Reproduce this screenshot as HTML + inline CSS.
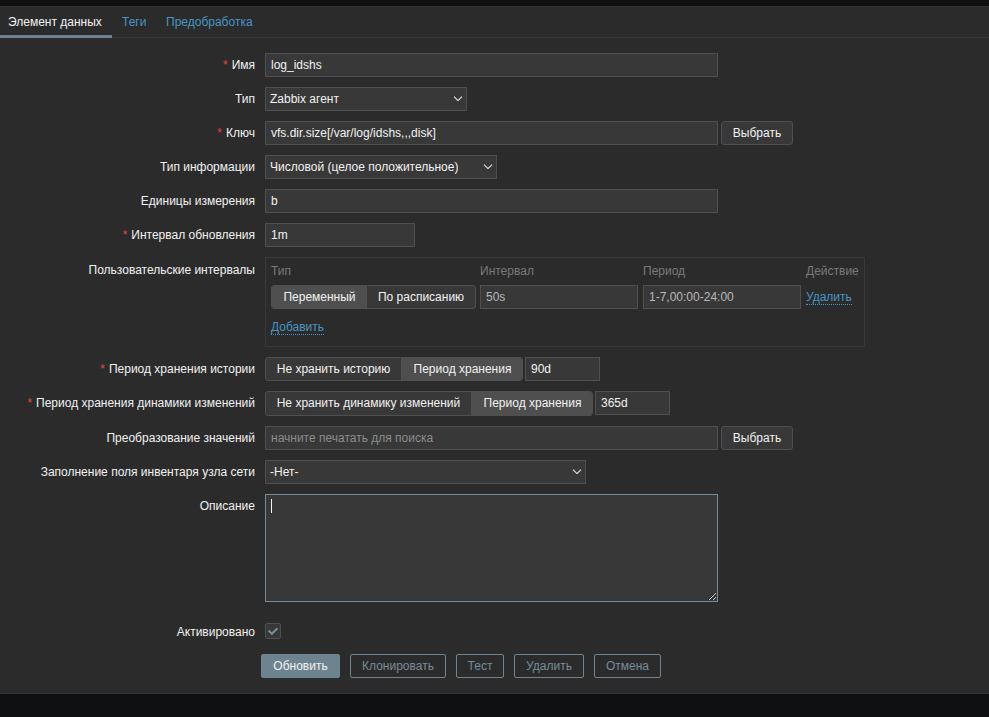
<!DOCTYPE html>
<html><head><meta charset="utf-8">
<style>
*{box-sizing:border-box;margin:0;padding:0}
html,body{width:989px;height:717px;overflow:hidden;background:#2b2b2b;font-family:"Liberation Sans",sans-serif;font-size:12px;color:#f2f2f2}
.a{position:absolute;white-space:nowrap}
.topband{left:0;top:0;width:989px;height:6px;background:#0f1012}
.topline{left:0;top:6px;width:989px;height:1px;background:#333}
.botband{left:0;top:694px;width:989px;height:23px;background:#0f1012}
.tabline{left:0;top:37px;width:989px;height:1px;background:#383838}
.tab{top:15px;line-height:14px;color:#4796c4}
.tabact{left:0;top:35px;width:112px;height:3px;background:#6b828e}
.lbl{right:734px;line-height:14px;text-align:right}
.req::before{content:"*";color:#e2473f;margin-right:4px}
.inp{left:265px;height:24px;border:1px solid #4f4f4f;background:#383838;padding:0 5px;line-height:22px;color:#f2f2f2;overflow:hidden}
.sel{padding-left:4px}
.sel svg{position:absolute;right:3px;top:7px}
.btng{height:24px;border:1px solid #4f4f4f;background:#383838;border-radius:3px;line-height:22px;text-align:center;color:#f2f2f2}
.th{top:264px;line-height:14px;color:#7a7a7a}
.rad{left:265px;height:24px;border:1px solid #4f4f4f;background:#383838;border-radius:3px;overflow:hidden}
.rad span{position:absolute;top:0;bottom:0;line-height:22px;text-align:center;color:#f2f2f2}
.rad .on{background:#4f4f4f}
.rad .on2{padding-left:2px}
.lnk{line-height:14px;color:#4796c4;border-bottom:1px dotted #4796c4}
.btn{top:654px;height:24px;border:1px solid #6e8591;border-radius:2px;line-height:22px;text-align:center;color:#768d99;background:transparent}
</style></head><body>
<div class="a topband"></div>
<div class="a topline"></div>
<div class="a tabline"></div>
<div class="a tabact"></div>
<div class="a tab" style="left:8px;color:#f2f2f2">Элемент данных</div>
<div class="a tab" style="left:122px">Теги</div>
<div class="a tab" style="left:166px">Предобработка</div>

<div class="a lbl req" style="top:58px">Имя</div>
<div class="a inp" style="top:53px;width:453px">log_idshs</div>

<div class="a lbl" style="top:92px">Тип</div>
<div class="a inp sel" style="top:87px;width:202px">Zabbix агент<svg width="10" height="6" viewBox="0 0 10 6"><path d="M1 1.6 L5 5.6 L9 1.6" fill="none" stroke="#e0e0e0" stroke-width="1.15"/></svg></div>

<div class="a lbl req" style="top:126px">Ключ</div>
<div class="a inp" style="top:121px;width:453px">vfs.dir.size[/var/log/idshs,,,disk]</div>
<div class="a btng" style="left:721px;top:121px;width:72px">Выбрать</div>

<div class="a lbl" style="top:160px">Тип информации</div>
<div class="a inp sel" style="top:155px;width:232px">Числовой (целое положительное)<svg width="10" height="6" viewBox="0 0 10 6"><path d="M1 1.6 L5 5.6 L9 1.6" fill="none" stroke="#e0e0e0" stroke-width="1.15"/></svg></div>

<div class="a lbl" style="top:194px">Единицы измерения</div>
<div class="a inp" style="top:189px;width:453px">b</div>

<div class="a lbl req" style="top:228px">Интервал обновления</div>
<div class="a inp" style="top:223px;width:150px">1m</div>

<div class="a lbl" style="top:263px">Пользовательские интервалы</div>
<div class="a" style="left:265px;top:257px;width:600px;height:90px;border:1px solid #383838"></div>
<div class="a th" style="left:271px">Тип</div>
<div class="a th" style="left:480px">Интервал</div>
<div class="a th" style="left:643px">Период</div>
<div class="a th" style="left:806px">Действие</div>
<div class="a rad" style="left:271px;top:285px;width:205px">
  <span class="on" style="left:0;width:95px">Переменный</span>
  <span style="left:95px;width:108px">По расписанию</span>
</div>
<div class="a inp" style="left:480px;top:285px;width:158px;color:#b8b8b8">50s</div>
<div class="a inp" style="left:643px;top:285px;width:158px;color:#b8b8b8">1-7,00:00-24:00</div>
<div class="a lnk" style="left:806px;top:290px">Удалить</div>
<div class="a lnk" style="left:271px;top:320px">Добавить</div>

<div class="a lbl req" style="top:362px">Период хранения истории</div>
<div class="a rad" style="top:357px;width:258px">
  <span style="left:0;width:135px">Не хранить историю</span>
  <span class="on on2" style="left:135px;width:121px">Период хранения</span>
</div>
<div class="a inp" style="left:525px;top:357px;width:75px">90d</div>

<div class="a lbl req" style="top:396px">Период хранения динамики изменений</div>
<div class="a rad" style="top:391px;width:328px;height:25px">
  <span style="left:0;width:205px">Не хранить динамику изменений</span>
  <span class="on on2" style="left:205px;width:121px">Период хранения</span>
</div>
<div class="a inp" style="left:595px;top:391px;width:75px">365d</div>

<div class="a lbl" style="top:431px">Преобразование значений</div>
<div class="a inp" style="top:426px;width:453px;color:#8c8c8c">начните печатать для поиска</div>
<div class="a btng" style="left:721px;top:426px;width:72px">Выбрать</div>

<div class="a lbl" style="top:465px">Заполнение поля инвентаря узла сети</div>
<div class="a inp sel" style="top:460px;width:321px">-Нет-<svg width="10" height="6" viewBox="0 0 10 6"><path d="M1 1.6 L5 5.6 L9 1.6" fill="none" stroke="#e0e0e0" stroke-width="1.15"/></svg></div>

<div class="a lbl" style="top:499px">Описание</div>
<div class="a" style="left:265px;top:494px;width:453px;height:108px;border:1px solid #768d99;background:#383838"></div>
<div class="a" style="left:271px;top:499px;width:1px;height:14px;background:#f2f2f2"></div>
<svg class="a" style="left:707px;top:591px" width="10" height="10" shape-rendering="crispEdges">
<g fill="#1e1e1e"><rect x="8" y="1" width="1" height="1"/><rect x="7" y="2" width="1" height="1"/><rect x="6" y="3" width="1" height="1"/><rect x="5" y="4" width="1" height="1"/><rect x="4" y="5" width="1" height="1"/><rect x="3" y="6" width="1" height="1"/><rect x="2" y="7" width="1" height="1"/><rect x="1" y="8" width="1" height="1"/>
<rect x="8" y="5" width="1" height="1"/><rect x="7" y="6" width="1" height="1"/><rect x="6" y="7" width="1" height="1"/><rect x="5" y="8" width="1" height="1"/></g>
<g fill="#d8d8d8"><rect x="8" y="2" width="1" height="1"/><rect x="7" y="3" width="1" height="1"/><rect x="6" y="4" width="1" height="1"/><rect x="5" y="5" width="1" height="1"/><rect x="4" y="6" width="1" height="1"/><rect x="3" y="7" width="1" height="1"/><rect x="2" y="8" width="1" height="1"/>
<rect x="8" y="6" width="1" height="1"/><rect x="7" y="7" width="1" height="1"/><rect x="6" y="8" width="1" height="1"/></g></svg>


<div class="a lbl" style="top:625px">Активировано</div>
<div class="a" style="left:265px;top:623px;width:16px;height:16px;border:1px solid #4f4f4f;background:#383838;border-radius:2px"></div>
<svg class="a" style="left:265px;top:623px" width="16" height="16" viewBox="0 0 16 16"><path d="M3.5 7.5 L6.8 10.8 L12.5 5.2" fill="none" stroke="#768d99" stroke-width="2"/></svg>

<div class="a btn" style="left:261px;width:79px;background:#6d8490;border-color:#6d8490;color:#f2f2f2">Обновить</div>
<div class="a btn" style="left:350px;width:96px">Клонировать</div>
<div class="a btn" style="left:456px;width:48px">Тест</div>
<div class="a btn" style="left:514px;width:70px">Удалить</div>
<div class="a btn" style="left:594px;width:67px">Отмена</div>

<div class="a" style="left:0;top:693px;width:989px;height:1px;background:#333"></div>
<div class="a botband"></div>
</body></html>
